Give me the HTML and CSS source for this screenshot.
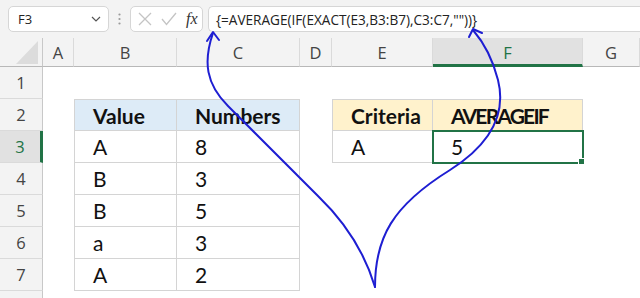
FILE: index.html
```html
<!DOCTYPE html>
<html lang="en">

<head>
  <meta charset="UTF-8">
  <meta name="viewport" content="width=device-width, initial-scale=1.0">
  <title>AVERAGEIF case sensitive</title>
  <link rel="stylesheet" href="styles.css">
</head>

<body>
  <div class="app">
    <div class="formula-bar">
      <div class="name-box">
        <span>F3</span>
        <svg class="chevron" width="10" height="6" viewBox="0 0 10 6">
          <path d="M1 1 L5 5 L9 1" fill="none" stroke="#555" stroke-width="1.2" />
        </svg>
      </div>
      <svg class="grip" width="3" height="12" viewBox="0 0 3 12">
        <circle cx="1.5" cy="1.5" r="1.1" fill="#9a9a9a" />
        <circle cx="1.5" cy="6" r="1.1" fill="#9a9a9a" />
        <circle cx="1.5" cy="10.5" r="1.1" fill="#9a9a9a" />
      </svg>
      <div class="fx-box">
        <svg width="14" height="14" viewBox="0 0 14 14">
          <path d="M1 1 L13 13 M13 1 L1 13" stroke="#c4c4c4" stroke-width="1.3" />
        </svg>
        <svg width="16" height="14" viewBox="0 0 16 14">
          <path d="M1 7 L5.5 12.5 L15 1" fill="none" stroke="#c4c4c4" stroke-width="1.3" />
        </svg>
        <span class="fx">fx</span>
      </div>
      <div class="formula">{=AVERAGE(IF(EXACT(E3,B3:B7),C3:C7,""))}</div>
    </div>

    <div class="sheet">
      <!-- column headers -->
      <div class="corner">
        <svg width="22" height="23" viewBox="0 0 22 23">
          <path d="M0 23 L22 0 L22 23 Z" fill="#dcdcdc" />
        </svg>
      </div>
      <div class="col-head">A</div>
      <div class="col-head">B</div>
      <div class="col-head">C</div>
      <div class="col-head">D</div>
      <div class="col-head">E</div>
      <div class="col-head active">F</div>
      <div class="col-head">G</div>

      <!-- row 1 -->
      <div class="row-head">1</div>
      <div></div><div></div><div></div><div></div><div></div><div></div><div></div>

      <!-- row 2 -->
      <div class="row-head">2</div>
      <div></div>
      <div class="t top left blue bold">Value</div>
      <div class="t top blue bold">Numbers</div>
      <div></div>
      <div class="t top left yellow bold">Criteria</div>
      <div class="t top yellow bold narrow">AVERAGEIF</div>
      <div></div>

      <!-- row 3 -->
      <div class="row-head active">3</div>
      <div></div>
      <div class="t left">A</div>
      <div class="t">8</div>
      <div></div>
      <div class="t left">A</div>
      <div class="t selected">5</div>
      <div></div>

      <!-- row 4 -->
      <div class="row-head">4</div>
      <div></div>
      <div class="t left">B</div>
      <div class="t">3</div>
      <div></div><div></div><div></div><div></div>

      <!-- row 5 -->
      <div class="row-head">5</div>
      <div></div>
      <div class="t left">B</div>
      <div class="t">5</div>
      <div></div><div></div><div></div><div></div>

      <!-- row 6 -->
      <div class="row-head">6</div>
      <div></div>
      <div class="t left">a</div>
      <div class="t">3</div>
      <div></div><div></div><div></div><div></div>

      <!-- row 7 -->
      <div class="row-head">7</div>
      <div></div>
      <div class="t left">A</div>
      <div class="t">2</div>
      <div></div><div></div><div></div><div></div>

      <!-- row 8, only its top edge is in view -->
      <div class="row-head"></div>
      <div></div><div></div><div></div><div></div><div></div><div></div><div></div>
    </div>

    <!-- hand drawn arrows over the sheet -->
    <svg class="arrows" width="640" height="298" viewBox="0 0 640 298">
      <g fill="none" stroke="#1e1ed2" stroke-width="2" stroke-linecap="round" stroke-linejoin="round">
        <path d="M213 33 C203 62 206 84 228 106 L318 196 C345 222 364 250 375 287" />
        <path d="M375 287 C375 238 392 206 450 170 C494 142 506 112 498 80 C493 60 485 44 473 30" />
        <path d="M207 41 L213 32 L219 40" />
        <path d="M469 37 L473 29 L482 33" />
      </g>
    </svg>
  </div>
</body>

</html>
```

FILE: styles.css
```css
body {
  margin: 0;
  padding: 0;
  width: 640px;
  height: 298px;
  overflow: hidden;
  background: #fff;
  font-family: "Open Sans", sans-serif;
  color: #222;
}

.app {
  position: relative;
  width: 640px;
  height: 298px;
  overflow: hidden;
}

/* formula bar */

.formula-bar {
  height: 38px;
  display: flex;
  align-items: center;
  padding: 0 0 0 8px;
  background-color: #f3f3f3;
  box-sizing: border-box;
}

.name-box {
  width: 101px;
  height: 26px;
  display: flex;
  align-items: center;
  justify-content: space-between;
  padding: 0 7px 0 9px;
  background-color: #fff;
  border: 1px solid #d6d6d6;
  border-radius: 5px;
  box-sizing: border-box;
  font-size: 13px;
}

.grip {
  margin: 0 9px 0 9px;
}

.fx-box {
  width: 73px;
  height: 26px;
  display: flex;
  align-items: center;
  gap: 9px;
  padding: 0 0 0 7px;
  background-color: #fff;
  border: 1px solid #d6d6d6;
  border-radius: 5px;
  box-sizing: border-box;
}

.fx {
  font-family: "Liberation Serif", serif;
  font-style: italic;
  font-size: 16px;
  color: #333;
}

.formula {
  flex: 1;
  height: 26px;
  margin-left: 5px;
  padding: 0 0 0 7px;
  display: flex;
  align-items: center;
  background-color: #fff;
  border: 1px solid #d6d6d6;
  border-radius: 5px 0 0 5px;
  border-right: none;
  box-sizing: border-box;
  font-size: 13.6px;
  white-space: nowrap;
}

/* sheet */

.sheet {
  display: grid;
  grid-template-columns: 43px 31px 103px 123px 32px 101px 150px 57px;
  grid-template-rows: 29px repeat(8, 32px);
}

.corner {
  display: flex;
  align-items: flex-end;
  justify-content: flex-end;
  padding: 0 4px 2px 0;
  background-color: #f3f3f3;
  border-right: 1px solid #c8c8c8;
  border-bottom: 1px solid #b8b8b8;
  box-sizing: border-box;
}

.col-head {
  display: flex;
  align-items: center;
  justify-content: center;
  background-color: #f3f3f3;
  border-right: 1px solid #dadada;
  border-bottom: 1px solid #b8b8b8;
  box-sizing: border-box;
  font-size: 16.5px;
  color: #444;
}

.col-head.active {
  background-color: #e1e1e1;
  border-bottom: 3px solid #217346;
  color: #217346;
  padding-top: 2px;
}

.row-head {
  display: flex;
  align-items: center;
  justify-content: center;
  background-color: #f3f3f3;
  border-right: 1px solid #c8c8c8;
  border-bottom: 1px solid #dadada;
  box-sizing: border-box;
  font-size: 16.5px;
  color: #444;
}

.row-head.active {
  background-color: #e1e1e1;
  border-right: 3px solid #217346;
  color: #217346;
}

/* table cells */

.t {
  display: flex;
  align-items: center;
  padding-left: 18px;
  border-right: 1px solid #d4d4d4;
  border-bottom: 1px solid #d4d4d4;
  box-sizing: border-box;
  font-family: Lato, sans-serif;
  font-size: 21px;
  color: #111;
}

.t.top {
  border-top: 1px solid #d4d4d4;
}

.t.left {
  border-left: 1px solid #d4d4d4;
}

.t.bold {
  font-weight: bold;
}

.t.narrow {
  letter-spacing: -1.8px;
}

.t.blue {
  background-color: #ddebf7;
}

.t.yellow {
  background-color: #fff2cc;
}

.t.selected {
  position: relative;
  outline: 2px solid #217346;
  outline-offset: -1px;
}

.t.selected::after {
  content: "";
  position: absolute;
  right: -3px;
  bottom: -3px;
  width: 5px;
  height: 5px;
  background-color: #217346;
  border: 1px solid #fff;
}

.arrows {
  position: absolute;
  top: 0;
  left: 0;
  pointer-events: none;
}
```
